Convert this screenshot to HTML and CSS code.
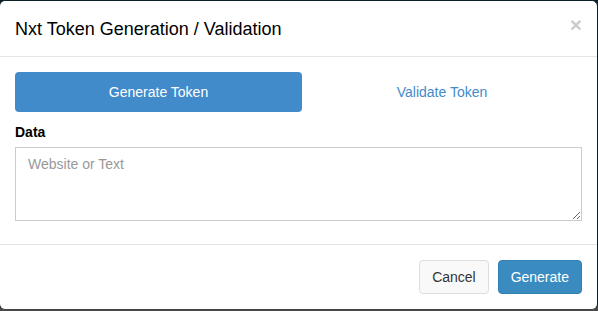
FILE: index.html
```html
<!DOCTYPE html>
<html>
<head>
<meta charset="UTF-8" />
<title>Nxt Token Generation / Validation</title>
<link rel="stylesheet" href="styles.css">
</head>
<body>
<div class="modal">
	<div class="modal-header">
		<span class="close">&times;</span>
		<h4 class="modal-title">Nxt Token Generation / Validation</h4>
	</div>
	<div class="modal-body">
		<ul class="pills">
			<li class="active"><a>Generate Token</a></li>
			<li><a>Validate Token</a></li>
		</ul>
		<div class="form-group">
			<label>Data</label>
			<textarea rows="3" placeholder="Website or Text"></textarea>
		</div>
	</div>
	<div class="modal-footer">
		<span class="btn btn-default">Cancel</span>
		<span class="btn btn-primary">Generate</span>
	</div>
</div>
</body>
</html>
```

FILE: styles.css
```css
* {
	padding: 0px;
	margin: 0px;
	box-sizing: border-box;
}
html {
	height: 100%;
}
body {
	font: 14px/20px "Liberation Sans", Arial, sans-serif;
	color: #333;
	background: linear-gradient(#0b1f26 0%, #1d2b30 50%, #4a4a4a 100%);
	height: 100%;
	overflow: hidden;
}

.modal {
	margin-left: -1px;
	background: #fff;
	border: 1px solid #0b1f26;
	border-bottom-color: #444;
	border-radius: 6px;
}
.modal-header {
	padding: 16px 15px 14px;
	border-bottom: 1px solid #e5e5e5;
}
.modal-title {
	font-size: 18px;
	font-weight: normal;
	line-height: 25px;
	color: #000;
}
.close {
	float: right;
	font-size: 21px;
	font-weight: bold;
	line-height: 1;
	color: #000;
	opacity: 0.2;
	margin-top: -3px;
}

.modal-body {
	padding: 15px 15px 23px;
}
.pills {
	list-style: none;
	display: grid;
	grid-template-columns: 287px 1fr;
}
.pills li {
	text-align: center;
}
.pills a {
	display: block;
	padding: 10px 15px;
	border-radius: 4px;
	color: #428bca;
}
.pills .active a {
	background-color: #428bca;
	color: #fff;
}

.form-group {
	margin-top: 10px;
}
label {
	display: inline-block;
	font-weight: bold;
	color: #000;
	margin-bottom: 5px;
}
textarea {
	display: block;
	width: 100%;
	padding: 6px 12px;
	font: 14px/20px "Liberation Sans", Arial, sans-serif;
	color: #555;
	border: 1px solid #ccc;
	border-radius: 0;
	resize: vertical;
	outline: none;
}
textarea::placeholder {
	color: #999;
}

.modal-footer {
	padding: 15px 15px 15px;
	border-top: 1px solid #e5e5e5;
	text-align: right;
}
.btn {
	display: inline-block;
	padding: 6px 12px;
	font-size: 14px;
	line-height: 20px;
	border: 1px solid transparent;
	border-radius: 4px;
	margin-left: 5px;
}
.btn-default {
	color: #333;
	background-color: #f9f9f9;
	border-color: #ddd;
}
.btn-primary {
	color: #fff;
	background-color: #3a8bbf;
	border-color: #3580b3;
}
```
